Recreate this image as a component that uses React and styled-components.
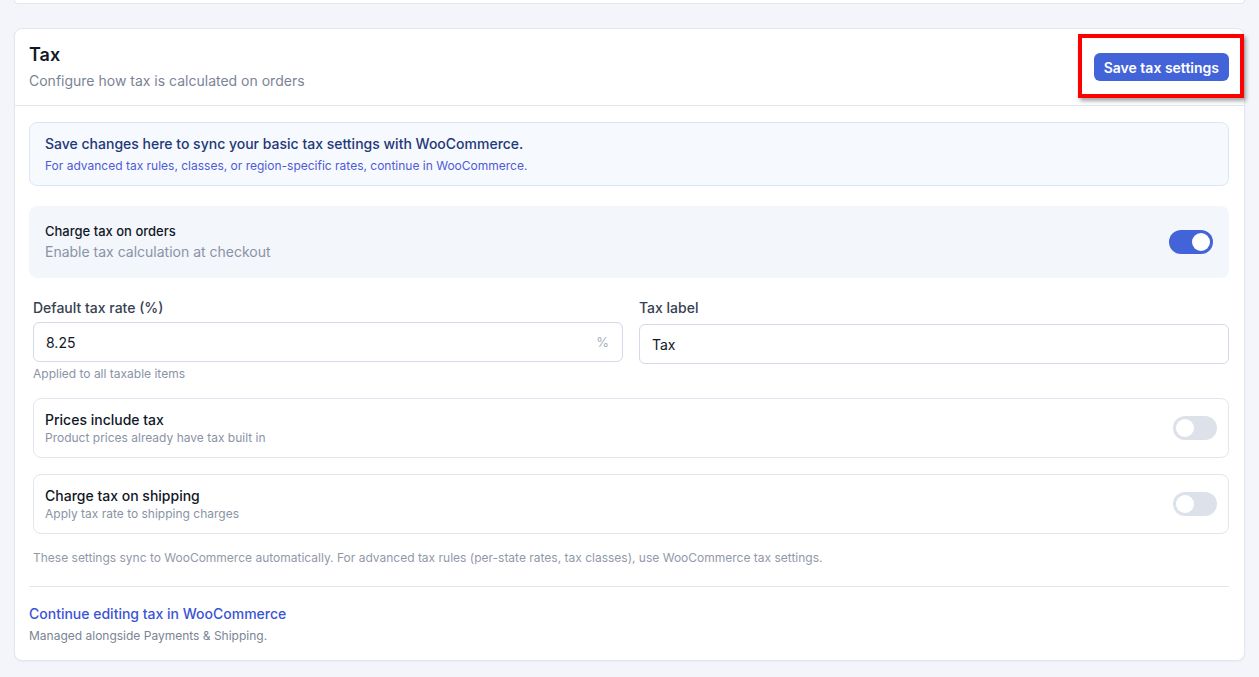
import styled, { createGlobalStyle } from "styled-components";

const GlobalStyle = createGlobalStyle`
  body {
    margin: 0;
    background: #f3f5fa;
    font-family: Inter, "Noto Sans", sans-serif;
    -webkit-font-smoothing: antialiased;
  }
`;

const Page = styled.div`
  min-height: 677px;
  padding: 0 14px 17px 14px;
  box-sizing: border-box;
`;

const PrevCard = styled.div`
  height: 3px;
  background: #fff;
  border: 1px solid #e3e6ee;
  border-top: none;
  border-radius: 0 0 8px 8px;
  margin-bottom: 24px;
`;

const Card = styled.section`
  background: #fff;
  border: 1px solid #e3e6ee;
  border-radius: 8px;
  box-shadow: 0 1px 2px rgba(16, 24, 40, 0.04);
`;

const Header = styled.header`
  display: flex;
  align-items: center;
  justify-content: space-between;
  padding: 14px 15px 14px 14px;
  border-bottom: 1px solid #e3e6ee;
`;

const Title = styled.h2`
  margin: 0;
  font-size: 18px;
  line-height: 24px;
  font-weight: 600;
  color: #111827;
`;

const Subtitle = styled.p`
  margin: 4px 0 0;
  font-size: 14px;
  line-height: 20px;
  color: #7b8496;
`;

/* red annotation frame drawn over the header action */
const Highlight = styled.div`
  position: relative;
  &::after {
    content: "";
    position: absolute;
    top: -19px;
    left: -16px;
    right: -15px;
    bottom: -17px;
    border: 4px solid #ff0000;
    box-shadow: 2px 3px 4px rgba(0, 0, 0, 0.35);
    pointer-events: none;
  }
`;

const PrimaryButton = styled.button`
  display: block;
  height: 28px;
  padding: 0 10px;
  border: none;
  border-radius: 6px;
  background: #4364d8;
  color: #fff;
  font-family: inherit;
  font-size: 14px;
  font-weight: 600;
`;

const Body = styled.div`
  display: flex;
  flex-direction: column;
  padding: 16px 15px 16px 14px;
`;

const InfoBox = styled.div`
  padding: 11px 15px 11px;
  background: #f6f9fe;
  border: 1px solid #d9e7f7;
  border-radius: 8px;
`;

const InfoTitle = styled.p`
  margin: 0;
  font-size: 14px;
  line-height: 20px;
  font-weight: 500;
  color: #233876;
`;

const InfoText = styled.p`
  margin: 4px 0 0;
  font-size: 12px;
  line-height: 16px;
  color: #4f5bd5;
`;

const MainToggleRow = styled.div`
  display: flex;
  align-items: center;
  justify-content: space-between;
  margin-top: 20px;
  padding: 16px;
  background: #f3f6fb;
  border-radius: 8px;
`;

const MainToggleTitle = styled.p`
  margin: 0;
  font-size: 13px;
  line-height: 18px;
  font-weight: 500;
  color: #111827;
`;

const MainToggleText = styled.p`
  margin: 2px 0 0;
  font-size: 14px;
  line-height: 20px;
  color: #8a93a6;
`;

const Inset = styled.div`
  display: flex;
  flex-direction: column;
  padding-left: 4px;
`;

const FieldGrid = styled.div`
  display: grid;
  grid-template-columns: 1fr 1fr;
  gap: 16px;
  margin-top: 20px;
`;

const Field = styled.div`
  display: flex;
  flex-direction: column;
`;

const Label = styled.label`
  font-size: 14px;
  line-height: 20px;
  font-weight: 500;
  color: #374151;
  margin-bottom: ${(p) => p.$gap}px;
`;

const InputBox = styled.div`
  display: flex;
  align-items: center;
  height: 40px;
  box-sizing: border-box;
  padding: 0 12px;
  border: 1px solid #d4d8e8;
  border-radius: 6px;
  background: #fff;
`;

const InputValue = styled.span`
  flex: 1;
  font-size: 14px;
  color: #111827;
`;

const Suffix = styled.span`
  font-size: 13px;
  color: #a8afc0;
  margin-right: 1px;
`;

const Help = styled.p`
  margin: 4px 0 0;
  font-size: 12px;
  line-height: 16px;
  color: #8a93a6;
`;

const OptionRow = styled.div`
  display: flex;
  align-items: center;
  justify-content: space-between;
  margin-top: 16px;
  padding: 11px;
  border: 1px solid #e3e6ee;
  border-radius: 8px;
  background: #fff;
`;

const OptionTitle = styled.p`
  margin: 0;
  font-size: 14px;
  line-height: 20px;
  font-weight: 500;
  color: #111827;
`;

const OptionText = styled.p`
  margin: 0;
  font-size: 12px;
  line-height: 16px;
  color: #8a93a6;
`;

const Toggle = styled.span`
  position: relative;
  flex: none;
  width: 44px;
  height: 24px;
  border-radius: 12px;
  background: ${(p) => (p.$on ? "#4364d8" : "#dde2ea")};
  &::after {
    content: "";
    position: absolute;
    top: 3px;
    left: ${(p) => (p.$on ? "23px" : "3px")};
    width: 18px;
    height: 18px;
    border-radius: 50%;
    background: #fff;
  }
`;

const Footnote = styled.p`
  margin: 16px 0 0;
  font-size: 12px;
  line-height: 16px;
  color: #9199aa;
`;

const Divider = styled.hr`
  margin: 20px 0 0;
  border: none;
  border-top: 1px solid #e3e6ee;
`;

const Link = styled.a`
  margin-top: 17px;
  font-size: 14px;
  line-height: 20px;
  font-weight: 500;
  color: #3b54d6;
  text-decoration: none;
`;

const Managed = styled.p`
  margin: 4px 0 0;
  font-size: 12px;
  line-height: 16px;
  color: #7b8496;
`;

const options = [
  { title: "Prices include tax", text: "Product prices already have tax built in" },
  { title: "Charge tax on shipping", text: "Apply tax rate to shipping charges" },
];

export default function App() {
  return (
    <>
      <GlobalStyle />
      <Page>
        <PrevCard />
        <Card>
          <Header>
            <div>
              <Title>Tax</Title>
              <Subtitle>Configure how tax is calculated on orders</Subtitle>
            </div>
            <Highlight>
              <PrimaryButton>Save tax settings</PrimaryButton>
            </Highlight>
          </Header>
          <Body>
            <InfoBox>
              <InfoTitle>Save changes here to sync your basic tax settings with WooCommerce.</InfoTitle>
              <InfoText>For advanced tax rules, classes, or region-specific rates, continue in WooCommerce.</InfoText>
            </InfoBox>

            <MainToggleRow>
              <div>
                <MainToggleTitle>Charge tax on orders</MainToggleTitle>
                <MainToggleText>Enable tax calculation at checkout</MainToggleText>
              </div>
              <Toggle $on />
            </MainToggleRow>

            <Inset>
              <FieldGrid>
                <Field>
                  <Label $gap={4}>Default tax rate (%)</Label>
                  <InputBox>
                    <InputValue>8.25</InputValue>
                    <Suffix>%</Suffix>
                  </InputBox>
                  <Help>Applied to all taxable items</Help>
                </Field>
                <Field>
                  <Label $gap={6}>Tax label</Label>
                  <InputBox>
                    <InputValue>Tax</InputValue>
                  </InputBox>
                </Field>
              </FieldGrid>

              {options.map((o) => (
                <OptionRow key={o.title}>
                  <div>
                    <OptionTitle>{o.title}</OptionTitle>
                    <OptionText>{o.text}</OptionText>
                  </div>
                  <Toggle />
                </OptionRow>
              ))}

              <Footnote>
                These settings sync to WooCommerce automatically. For advanced tax rules (per-state rates, tax classes), use WooCommerce tax settings.
              </Footnote>
            </Inset>

            <Divider />
            <Link href="#">Continue editing tax in WooCommerce</Link>
            <Managed>Managed alongside Payments &amp; Shipping.</Managed>
          </Body>
        </Card>
      </Page>
    </>
  );
}
